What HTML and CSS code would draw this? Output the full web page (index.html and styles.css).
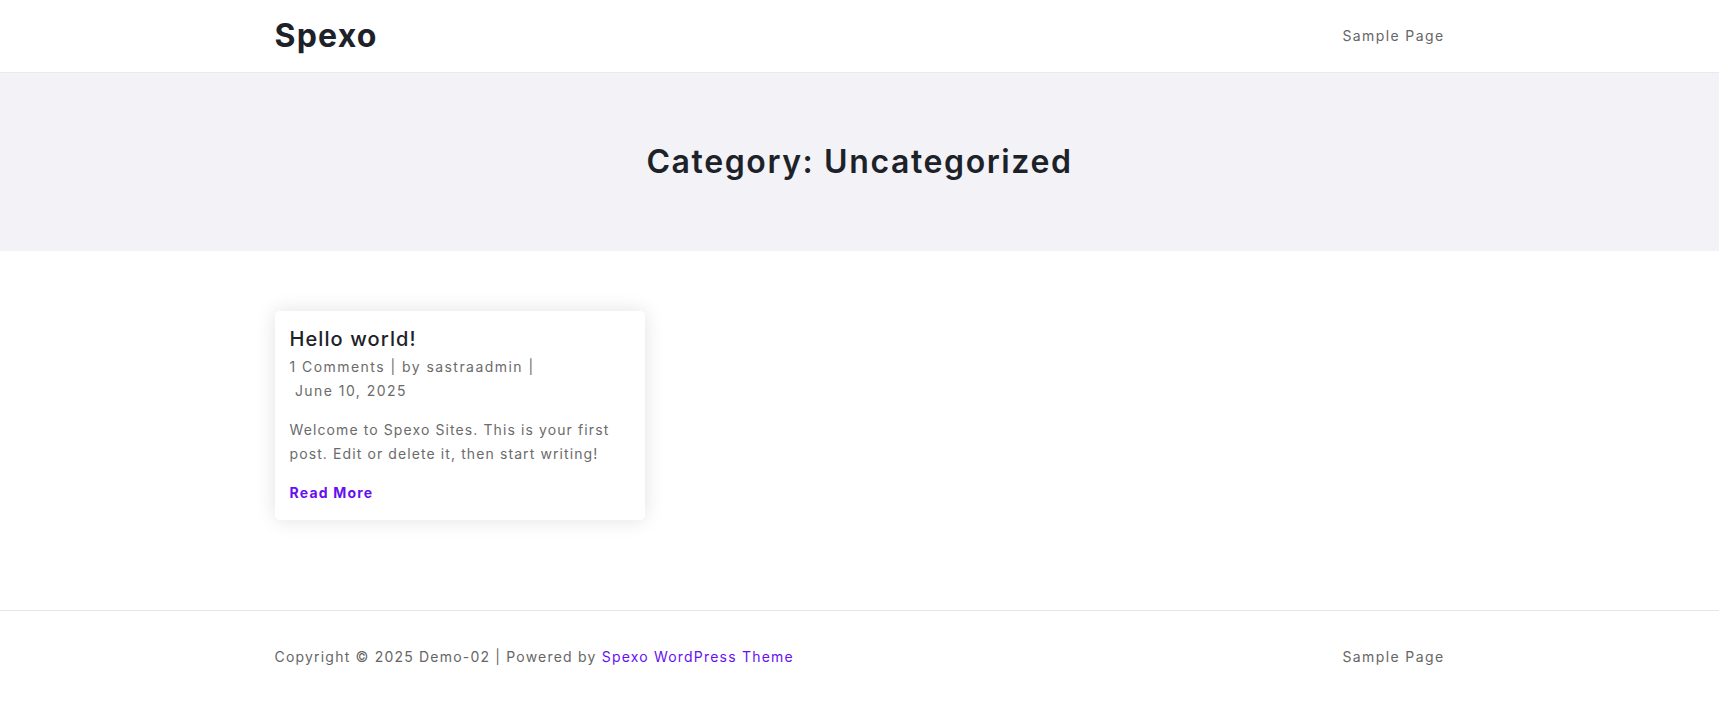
FILE: index.html
```html
<!DOCTYPE html>
<html lang="en">
<head>
<meta charset="utf-8">
<title>Uncategorized – Demo-02</title>
<link rel="stylesheet" href="styles.css">
</head>
<body>
<header class="site-header">
  <div class="container header-inner">
    <a class="logo" href="#">Spexo</a>
    <nav class="main-nav"><a href="#">Sample Page</a></nav>
  </div>
</header>
<section class="page-hero">
  <h1 class="page-title">Category: Uncategorized</h1>
</section>
<main class="site-main">
  <div class="container post-grid">
    <article class="post-card">
      <h2 class="post-title">Hello world!</h2>
      <div class="post-meta">1 Comments | by sastraadmin | <br>&nbsp;June 10, 2025</div>
      <p class="post-excerpt">Welcome to Spexo Sites. This is your first post. Edit or delete it, then start writing!</p>
      <a class="read-more" href="#">Read More</a>
    </article>
  </div>
</main>
<footer class="site-footer">
  <div class="container footer-inner">
    <div class="copyright">Copyright © 2025 Demo-02 | Powered by <a href="#">Spexo WordPress Theme</a></div>
    <nav class="footer-nav"><a href="#">Sample Page</a></nav>
  </div>
</footer>
</body>
</html>
```
FILE: styles.css
```css
* { box-sizing: border-box; }
html, body { margin: 0; padding: 0; }
body {
  font-family: Inter, "Open Sans", "Liberation Sans", sans-serif;
  color: #666;
  background: #fff;
  font-size: 14px;
}
a { text-decoration: none; }
.container {
  width: 1170px;
  margin: 0 auto;
}
.site-header {
  height: 73px;
  border-bottom: 1px solid #e8e8ee;
}
.header-inner {
  height: 72px;
  padding-bottom: 2px;
  display: flex;
  align-items: center;
  justify-content: space-between;
}
.logo {
  font-size: 32px;
  font-weight: 700;
  color: #1d2228;
  letter-spacing: 1.2px;
}
.main-nav a, .footer-nav a {
  color: #666;
  font-size: 14px;
  letter-spacing: 1.4px;
}
.page-hero {
  background: #f2f2f7;
  height: 178px;
  padding-bottom: 2px;
  display: flex;
  align-items: center;
  justify-content: center;
}
.page-title {
  margin: 0;
  font-size: 32px;
  font-weight: 600;
  color: #1d2228;
  letter-spacing: 1.6px;
}
.site-main {
  padding: 60px 0 90px;
}
.post-grid {
  display: grid;
  grid-template-columns: repeat(3, 1fr);
  gap: 30px;
}
.post-card {
  background: #fff;
  border-radius: 5px;
  box-shadow: 0 0 20px rgba(0, 0, 0, 0.12);
  padding: 15px 15px 15px;
  height: 209px;
}
.post-title {
  margin: 0 0 3px;
  font-size: 20px;
  font-weight: 500;
  color: #1d2228;
  line-height: 26px;
  letter-spacing: 1.1px;
}
.post-meta {
  line-height: 24px;
  letter-spacing: 1.45px;
  color: #6b6b6b;
}
.post-excerpt {
  margin: 15px 0 18px;
  line-height: 24px;
  letter-spacing: 1.1px;
  color: #6b6b6b;
}
.read-more {
  font-weight: 700;
  color: #6610f2;
  letter-spacing: 1.2px;
}
.site-footer {
  border-top: 1px solid #e6e6e6;
}
.footer-inner {
  height: 93px;
  padding-bottom: 2px;
  display: flex;
  align-items: center;
  justify-content: space-between;
}
.copyright {
  letter-spacing: 1.2px;
  color: #666;
}
.copyright a { color: #6610f2; }
```
